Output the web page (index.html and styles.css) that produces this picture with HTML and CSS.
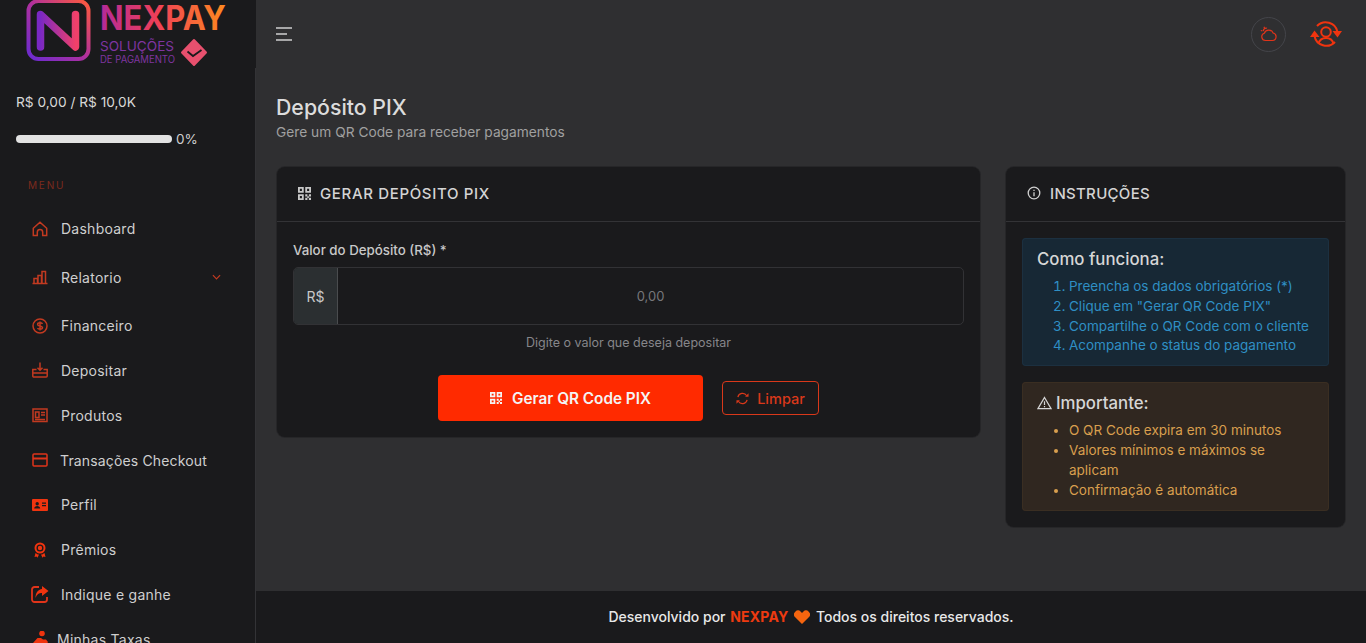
FILE: index.html
```html
<!DOCTYPE html>
<html lang="pt-BR">
<head>
  <meta charset="UTF-8" />
  <meta name="viewport" content="width=device-width, initial-scale=1" />
  <title>Depósito PIX - NexPay</title>
  <link rel="stylesheet" href="styles.css">
</head>
<body>
  <div class="app">
    <aside class="sidebar">
      <div class="sidebar-logo">
        <svg class="logo" width="256" height="68" viewBox="0 0 256 68">
          <defs>
            <linearGradient id="logo-box" x1="0" y1="1" x2="1" y2="0">
              <stop offset="0" stop-color="#6a2bd0" />
              <stop offset="0.5" stop-color="#b0309c" />
              <stop offset="1" stop-color="#ff5a3c" />
            </linearGradient>
            <linearGradient id="logo-n" x1="0" y1="0" x2="1" y2="0">
              <stop offset="0" stop-color="#7a28c4" />
              <stop offset="1" stop-color="#f0406a" />
            </linearGradient>
            <linearGradient id="logo-word" gradientUnits="userSpaceOnUse" x1="100" y1="0" x2="226" y2="0">
              <stop offset="0" stop-color="#b32a9a" />
              <stop offset="0.45" stop-color="#ee3f58" />
              <stop offset="1" stop-color="#ff8a1e" />
            </linearGradient>
          </defs>
          <rect x="28.500" y="1" width="60" height="58" rx="10" fill="none" stroke="url(#logo-box)" stroke-width="4" />
          <path d="M40.500 47V14.500L75.500 47V14.500" fill="none" stroke="url(#logo-n)" stroke-width="7.500" stroke-linejoin="round" stroke-linecap="round" />
          <text class="logo-word" x="100" y="30" textLength="126" lengthAdjust="spacingAndGlyphs" fill="url(#logo-word)">NEXPAY</text>
          <text class="logo-sub" x="100" y="51" textLength="74" lengthAdjust="spacingAndGlyphs">SOLUÇÕES</text>
          <text class="logo-sub-small" x="100" y="63" textLength="75" lengthAdjust="spacingAndGlyphs">DE PAGAMENTO</text>
          <path d="M194 40l12 12.500-12 12.500-12-12.500z" fill="#e8506e" stroke="#e8506e" stroke-width="2" stroke-linejoin="round" />
          <path d="M187.500 51.500l5.500 4.500 8.500-6" fill="none" stroke="#1a1a1c" stroke-width="1.800" />
        </svg>
      </div>

      <div class="sidebar-body">
        <div class="limit-text">R$ 0,00 / R$ 10,0K</div>
        <div class="limit-row">
          <div class="limit-bar"></div>
          <span class="limit-pct">0%</span>
        </div>

        <div class="menu-title">MENU</div>

        <ul class="nav">
          <li class="nav-item">
            <svg class="nav-icon dim" viewBox="0 0 16 16"><path d="M1.300 7.300L8 1.200l6.700 6.100v7.300h-4v-3.300a2.700 2.700 0 0 0-5.400 0v3.300h-4z" /></svg>
            <span>Dashboard</span>
          </li>
          <li class="nav-item nav-item-sub">
            <svg class="nav-icon dim" viewBox="0 0 16 16"><path d="M.5 14.500h15M2 14.500v-5h3.500v5M6 14.500v-8h3.500v8M10 14.500v-12h3.500v12" /></svg>
            <span>Relatorio</span>
            <svg class="nav-chevron" viewBox="0 0 10 6"><path d="M1 1l4 4 4-4" /></svg>
          </li>
          <li class="nav-item">
            <svg class="nav-icon dim" viewBox="0 0 16 16"><circle cx="8" cy="8" r="7" /><path d="M10.500 5.800C10 5 9 4.800 8 4.800c-1.300 0-2.400.6-2.400 1.600 0 2.200 4.900 1 4.900 3.200 0 1-1.100 1.600-2.500 1.600-1 0-2-.3-2.500-1.100M8 3.500v9" /></svg>
            <span>Financeiro</span>
          </li>
          <li class="nav-item">
            <svg class="nav-icon dim" viewBox="0 0 16 16"><path d="M4.500 7.500H.8v6.500a1 1 0 0 0 1 1h12.400a1 1 0 0 0 1-1V7.500h-3.700M.8 11h14.400M8 .5v7.500M5.500 5.800L8 8.300l2.500-2.500" /></svg>
            <span>Depositar</span>
          </li>
          <li class="nav-item">
            <svg class="nav-icon dim" viewBox="0 0 16 16"><path d="M1 2h14v12.500H1zM3.500 5h3.500v5.500H3.500zM9 5.500h4M9 8h4M3 12.500h10" /></svg>
            <span>Produtos</span>
          </li>
          <li class="nav-item">
            <svg class="nav-icon" viewBox="0 0 16 16"><rect x="1" y="2" width="14" height="12" rx="1" /><path d="M1 6.500h14" stroke-width="2" /></svg>
            <span class="nav-text-tight">Transações Checkout</span>
          </li>
          <li class="nav-item">
            <svg class="nav-icon" viewBox="0 0 16 16"><path class="filled" d="M1 2h14a1 1 0 0 1 1 1v10a1 1 0 0 1-1 1H1a1 1 0 0 1-1-1V3a1 1 0 0 1 1-1zm4.200 3a1.700 1.700 0 1 0 0 3.400 1.700 1.700 0 0 0 0-3.400zM2.200 11.500h6c0-1.500-1.300-2.400-3-2.400s-3 .9-3 2.400zM10 5.500v1.200h4V5.500zm0 2.500v1.200h4V8z" /></svg>
            <span>Perfil</span>
          </li>
          <li class="nav-item">
            <svg class="nav-icon" viewBox="0 0 16 16"><path class="filled" d="M8 .5a5.500 5.500 0 1 1 0 11 5.500 5.500 0 0 1 0-11zm0 2a3.500 3.500 0 1 0 0 7 3.500 3.500 0 0 0 0-7zm0 1.300a2.200 2.200 0 1 1 0 4.400 2.200 2.200 0 0 1 0-4.400zM3.500 11l2.300 1.500 1.200-.1-1.500 3.400-1-1.300-2 .4zM12.500 11l-2.300 1.500-1.200-.1 1.500 3.400 1-1.300 2 .4z" /></svg>
            <span>Prêmios</span>
          </li>
          <li class="nav-item">
            <svg class="nav-icon nav-icon-big" viewBox="0 0 18 18"><path d="M8 2H3.500A2.500 2.500 0 0 0 1 4.500v10A2.500 2.500 0 0 0 3.500 17h10a2.500 2.500 0 0 0 2.500-2.500V12" stroke-width="1.800" /><path class="filled" d="M11 1l6.500 5-6.500 5V8C8 8 6 9 4.500 13 4.500 8 7 4.500 11 4z" /></svg>
            <span>Indique e ganhe</span>
          </li>
          <li class="nav-item nav-item-last">
            <svg class="nav-icon" viewBox="0 0 16 16"><circle class="filled" cx="9" cy="2.500" r="2.800" /><path class="filled" d="M0 12l4.500-5h3.500l2 1.500h3l2 2.500-2 3.500H0z" /></svg>
            <span>Minhas Taxas</span>
          </li>
        </ul>
      </div>
    </aside>

    <main class="main">
      <header class="topbar">
        <svg class="menu-toggle" viewBox="0 0 16 14"><path d="M0 1h16M0 7h11M0 13h16" /></svg>
        <div class="topbar-right">
          <div class="theme-btn">
            <svg viewBox="0 0 18 16"><path d="M5.500 14.500h7a3.800 3.800 0 0 0 .6-7.500 4.700 4.700 0 0 0-8.800.3 3.700 3.700 0 0 0 1.200 7.200zM3.500 5.200A2.600 2.600 0 0 1 7 2.300M4 .8l.5 1.500M.8 4.500l1.500.3" /></svg>
          </div>
          <svg class="user-switch" viewBox="0 0 32 28">
            <circle cx="16" cy="12" r="4.800" />
            <path d="M8.500 23.500c1-3.500 4-5.500 7.500-5.500s6.500 2 7.500 5.500" />
            <path d="M7 6A12 12 0 0 1 27.500 12M25 22A12 12 0 0 1 4.500 16" />
            <path class="filled" d="M22.500 11H32l-4.500 6.500zM0 17h9.500L4.500 10.500z" />
          </svg>
        </div>
      </header>

      <div class="content">
        <h1 class="page-title">Depósito PIX</h1>
        <p class="page-sub">Gere um QR Code para receber pagamentos</p>

        <div class="cards">
          <section class="card card-main">
            <div class="card-head">
              <svg class="qr-icon" viewBox="0 0 12 12"><path d="M0 0h5.300v5.300H0zM1.700 1.700v1.900h1.900V1.700zM6.700 0H12v5.300H6.700zM8.400 1.700v1.900h1.900V1.700zM0 6.700h5.300V12H0zM1.700 8.400v1.900h1.900V8.400zM6.700 6.700h2v2h-2zM10 6.700h2v2h-2zM8.500 8.500H10v1.700H8.500zM6.700 10h2v2h-2zM10 10h2v2h-2z" /></svg>
              <h2>GERAR DEPÓSITO PIX</h2>
            </div>
            <div class="card-body">
              <label class="field-label">Valor do Depósito (R$) *</label>
              <div class="input-group">
                <span class="input-addon">R$</span>
                <input class="input-value" type="text" placeholder="0,00">
              </div>
              <p class="field-help">Digite o valor que deseja depositar</p>
              <div class="actions">
                <button class="btn-primary">
                  <svg class="qr-icon" viewBox="0 0 12 12"><path d="M0 0h5.300v5.300H0zM1.700 1.700v1.900h1.900V1.700zM6.700 0H12v5.300H6.700zM8.400 1.700v1.900h1.900V1.700zM0 6.700h5.300V12H0zM1.700 8.400v1.900h1.900V8.400zM6.700 6.700h2v2h-2zM10 6.700h2v2h-2zM8.500 8.500H10v1.700H8.500zM6.700 10h2v2h-2zM10 10h2v2h-2z" /></svg>
                  Gerar QR Code PIX
                </button>
                <button class="btn-outline">
                  <svg class="refresh-icon" viewBox="0 0 14 14"><path d="M2 5.500A5.200 5.200 0 0 1 11.500 4M12 8.500A5.200 5.200 0 0 1 2.500 10" /><path class="filled" d="M9.800 5h3.700V1.300zM4.200 9H.5v3.700z" /></svg>
                  Limpar
                </button>
              </div>
            </div>
          </section>

          <section class="card card-side">
            <div class="card-head">
              <svg class="info-icon" viewBox="0 0 14 14"><circle cx="7" cy="7" r="5.800" /><path d="M7 6.200v4M7 3.700v1.300" /></svg>
              <h2>INSTRUÇÕES</h2>
            </div>
            <div class="card-body card-body-side">
              <div class="callout callout-info">
                <h3>Como funciona:</h3>
                <ol>
                  <li>Preencha os dados obrigatórios (*)</li>
                  <li>Clique em "Gerar QR Code PIX"</li>
                  <li>Compartilhe o QR Code com o cliente</li>
                  <li>Acompanhe o status do pagamento</li>
                </ol>
              </div>
              <div class="callout callout-warn">
                <h3>
                  <svg class="warn-icon" viewBox="0 0 16 14"><path d="M8 1.200L15 13H1zM8 5.200v4M8 10.300v1.300" /></svg>
                  Importante:
                </h3>
                <ul>
                  <li>O QR Code expira em 30 minutos</li>
                  <li>Valores mínimos e máximos se aplicam</li>
                  <li>Confirmação é automática</li>
                </ul>
              </div>
            </div>
          </section>
        </div>
      </div>

      <footer class="footer">
        Desenvolvido por <strong>NEXPAY</strong>
        <svg class="heart" viewBox="0 0 16 14"><path d="M8 14L1.200 7.200A3.900 3.900 0 0 1 6.800 1.700L8 3l1.200-1.300a3.900 3.900 0 0 1 5.600 5.500z" /></svg>
        Todos os direitos reservados.
      </footer>
    </main>
  </div>
</body>
</html>
```

FILE: styles.css
```css
* {
  box-sizing: border-box;
}

html,
body {
  margin: 0;
  height: 100%;
  overflow: hidden;
}

body {
  font-family: Inter, "Liberation Sans", sans-serif;
  background: #2f2f31;
  color: #d6d6d6;
}

.app {
  display: flex;
  height: 100vh;
}

/* sidebar */

.sidebar {
  width: 256px;
  flex-shrink: 0;
  display: flex;
  flex-direction: column;
  background: #1a1a1c;
  overflow: hidden;
}

.sidebar-logo {
  height: 68px;
  flex-shrink: 0;
}

.logo {
  display: block;
}

.logo-word {
  font-family: Inter, sans-serif;
  font-size: 34px;
  font-weight: 700;
}

.logo-sub {
  font-family: Inter, sans-serif;
  font-size: 13.500px;
  font-weight: 400;
  fill: #7f35a0;
}

.logo-sub-small {
  font-family: Inter, sans-serif;
  font-size: 10px;
  font-weight: 400;
  fill: #7f35a0;
}

.sidebar-body {
  flex: 1;
  border-right: 1px solid #333336;
  padding-top: 25px;
  overflow: hidden;
}

.limit-text {
  padding-left: 16px;
  font-size: 13.700px;
  line-height: 18px;
  color: #d8d8d8;
}

.limit-row {
  display: flex;
  align-items: center;
  gap: 4px;
  margin-top: 19px;
  padding-left: 16px;
  font-size: 13.500px;
  line-height: 18px;
}

.limit-bar {
  width: 156px;
  height: 8px;
  border-radius: 4px;
  background: #e2e2e2;
}

.limit-pct {
  color: #cfcfcf;
}

.menu-title {
  margin-top: 30px;
  padding-left: 28px;
  font-size: 10px;
  line-height: 14px;
  letter-spacing: 1.800px;
  color: #7c2a1c;
}

.nav {
  list-style: none;
  margin: 14.500px 0 0;
  padding: 0;
}

.nav-item {
  display: flex;
  align-items: center;
  height: 44.800px;
  padding-left: 32px;
  font-size: 14px;
  letter-spacing: 0.25px;
  color: #cfcfcf;
}

.nav-item-sub {
  height: 52px;
}

.nav-item-last {
  padding-left: 33px;
}

.nav-icon {
  width: 16px;
  height: 16px;
  margin-right: 13px;
  flex-shrink: 0;
  fill: none;
  stroke: #e0341a;
  stroke-width: 1.500;
}

.nav-icon.dim {
  stroke: #c23a20;
}

.nav-icon .filled {
  fill: #f0340f;
  stroke: none;
  fill-rule: evenodd;
}

.nav-icon-big {
  width: 18px;
  height: 18px;
  margin-left: -1px;
  margin-right: 12px;
}

.nav-item-last .nav-icon {
  margin-right: 8px;
}

.nav-text-tight {
  margin-left: -1px;
  letter-spacing: 0.15px;
}

.nav-chevron {
  width: 9px;
  height: 6px;
  margin-left: auto;
  margin-right: 34px;
  fill: none;
  stroke: #c23a20;
  stroke-width: 1.300;
}

/* main */

.main {
  flex: 1;
  min-width: 0;
  display: flex;
  flex-direction: column;
}

.topbar {
  height: 68px;
  flex-shrink: 0;
  display: flex;
  align-items: center;
  justify-content: space-between;
  padding: 0 24px 0 20px;
}

.menu-toggle {
  width: 16px;
  height: 14px;
  fill: none;
  stroke: #d0d0d0;
  stroke-width: 1.600;
}

.topbar-right {
  display: flex;
  align-items: center;
  gap: 24px;
}

.theme-btn {
  display: flex;
  align-items: center;
  justify-content: center;
  width: 35px;
  height: 35px;
  border: 1px solid #44454a;
  border-radius: 50%;
}

.theme-btn svg {
  width: 18px;
  height: 16px;
  fill: none;
  stroke: #e0341a;
  stroke-width: 1.200;
}

.user-switch {
  width: 32px;
  height: 28px;
  fill: none;
  stroke: #f0340f;
  stroke-width: 2;
}

.user-switch .filled {
  fill: #f0340f;
  stroke: none;
}

.content {
  flex: 1;
  padding: 26px 21px 0 21px;
  min-height: 0;
}

.page-title {
  margin: 0 0 0 -1px;
  font-size: 21.300px;
  font-weight: 500;
  line-height: 26px;
  color: #dcdcdc;
}

.page-sub {
  margin: 3px 0 0 -1px;
  font-size: 13.750px;
  line-height: 18px;
  color: #a0a0a0;
}

.cards {
  display: flex;
  align-items: flex-start;
  gap: 26px;
  margin-top: 26px;
}

.card {
  background: #1a1a1c;
  border-radius: 8px;
  box-shadow: 0 0 0 1px #262628;
}

.card-main {
  width: 703px;
}

.card-side {
  width: 339px;
}

.card-head {
  display: flex;
  align-items: center;
  height: 55px;
  padding: 0 21px 2px;
  border-bottom: 1px solid #333336;
}

.card-head h2 {
  margin: 0;
  font-size: 15px;
  font-weight: 500;
  color: #d4d4d4;
  letter-spacing: 0.3px;
}

.card-main .card-head h2 {
  letter-spacing: 0.65px;
}

.qr-icon {
  width: 13px;
  height: 13px;
  margin-right: 9px;
  fill: #c8c8c8;
  fill-rule: evenodd;
}

.info-icon {
  width: 14px;
  height: 14px;
  margin-right: 9px;
  fill: none;
  stroke: #d0d0d0;
  stroke-width: 1.300;
}

.card-body {
  padding: 17px 16px 16px;
}

.field-label {
  display: block;
  font-size: 13.300px;
  font-weight: 500;
  line-height: 22px;
  color: #c8c8c8;
}

.input-group {
  display: flex;
  height: 58px;
  margin-top: 6px;
  border: 1px solid #323235;
  border-radius: 5px;
  overflow: hidden;
}

.input-addon {
  display: flex;
  align-items: center;
  justify-content: center;
  width: 44px;
  background: #2b2f31;
  border-right: 1px solid #4a4c4e;
  font-size: 14px;
  color: #c8c8c8;
}

.input-value {
  flex: 1;
  min-width: 0;
  border: none;
  outline: none;
  background: transparent;
  text-align: center;
  font-family: inherit;
  font-size: 13px;
  color: #d0d0d0;
}

.input-value::placeholder {
  color: #77777a;
}

.field-help {
  margin: 9px 0 0;
  text-align: center;
  font-size: 12.500px;
  line-height: 17px;
  color: #86868a;
}

.actions {
  display: flex;
  align-items: center;
  justify-content: center;
  gap: 19px;
  margin-top: 24px;
}

.btn-primary {
  display: flex;
  align-items: center;
  justify-content: center;
  width: 265px;
  height: 46px;
  border: none;
  border-radius: 4px;
  background: #ff2a00;
  color: #f4f4f4;
  font-family: inherit;
  font-size: 15.300px;
  font-weight: 600;
  cursor: pointer;
}

.btn-primary .qr-icon {
  fill: #f4f4f4;
  width: 12px;
  height: 12px;
  margin-right: 10px;
}

.btn-outline {
  display: flex;
  align-items: center;
  justify-content: center;
  width: 97px;
  height: 34px;
  border: 1px solid #d9381a;
  border-radius: 4px;
  background: transparent;
  color: #d9381a;
  font-family: inherit;
  font-size: 14.500px;
  font-weight: 500;
  cursor: pointer;
}

.refresh-icon {
  width: 13px;
  height: 13px;
  margin-right: 8px;
  fill: none;
  stroke: #d9381a;
  stroke-width: 1.300;
}

.refresh-icon .filled {
  fill: #d9381a;
  stroke: none;
}

.card-body-side {
  display: flex;
  flex-direction: column;
  gap: 16px;
  padding-top: 16px;
}

.callout {
  padding: 10px 15px 10px;
  border-radius: 4px;
  font-size: 13.500px;
  line-height: 19.800px;
}

.callout h3 {
  display: flex;
  align-items: center;
  margin: 0 0 7px;
  font-size: 16.800px;
  font-weight: 500;
  line-height: 22px;
  color: #d6d6d6;
}

.callout ol,
.callout ul {
  margin: 0;
  padding-left: 32px;
}

.callout-info {
  background: #172835;
  box-shadow: inset 0 0 0 1px #1c3040;
  color: #2f8fc4;
}

.callout-warn {
  padding-bottom: 11px;
  background: #302720;
  box-shadow: inset 0 0 0 1px #3a2e22;
  color: #d99f4e;
}

.warn-icon {
  width: 15px;
  height: 14px;
  margin-right: 4px;
  fill: none;
  stroke: #d6d6d6;
  stroke-width: 1.300;
}

.footer {
  height: 52px;
  flex-shrink: 0;
  background: #1a1a1c;
  text-align: center;
  font-size: 14px;
  font-weight: 500;
  line-height: 52px;
  color: #e8e8e8;
}

.footer strong {
  margin-left: 1px;
  font-weight: 700;
  letter-spacing: 0.2px;
  color: #ee3a10;
}

.heart {
  width: 16px;
  height: 14px;
  margin: 0 2px;
  vertical-align: -2px;
  fill: #f5650f;
}
```
